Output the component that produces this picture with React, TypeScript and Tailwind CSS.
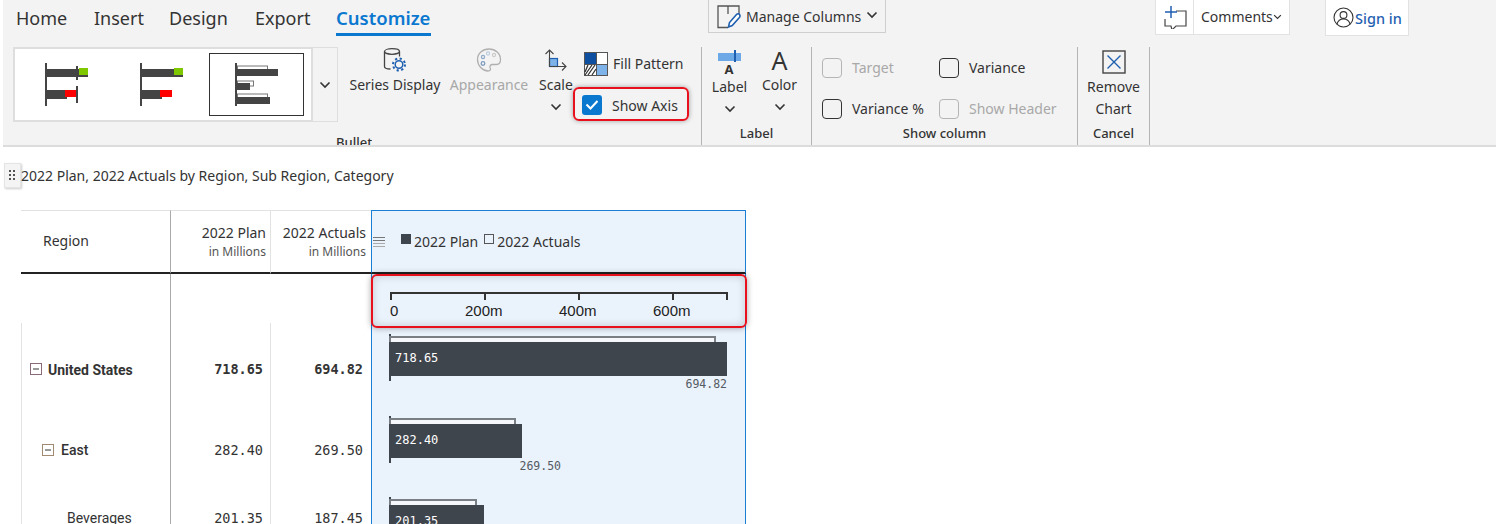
import React from "react";

const ui = "font-['Noto_Sans','Open_Sans',sans-serif]";
const body = "font-['Noto_Sans',Roboto,sans-serif]";
const rowFont = "font-['Roboto','Noto_Sans',sans-serif]";
const mono = "font-['DejaVu_Sans_Mono','Liberation_Mono',monospace]";

function Chevron({ className = "" }: { className?: string }) {
  return (
    <svg width="12" height="8" viewBox="0 0 12 8" className={className} fill="none" stroke="#333" strokeWidth="1.6">
      <path d="M1.5 1.5 6 6l4.5-4.5" />
    </svg>
  );
}

function GalleryOne({ gap }: { gap: boolean }) {
  return (
    <svg width="46" height="46" viewBox="0 0 46 46">
      <rect x="0" y="0" width="2" height="43" fill="#444" />
      <rect x="2" y="6" width="32" height="8" fill="#444" />
      <rect x="34" y="6" width="9" height="8" fill="#444" />
      <rect x="34" y="5" width="9" height="7" fill="#7fc800" />
      <rect x="2" y="27" width="20" height="9" fill="#444" />
      <rect x="20" y="27" width="12" height="7" fill="#ff0000" />
      {gap && <rect x="31" y="3" width="2" height="14" fill="#444" />}
      {gap && <rect x="31" y="23" width="2" height="17" fill="#444" />}
    </svg>
  );
}

function GalleryThree() {
  return (
    <svg width="46" height="46" viewBox="0 0 46 46">
      <rect x="0" y="0" width="2" height="43" fill="#444" />
      <rect x="2.5" y="3" width="30" height="4" fill="#fff" stroke="#777" />
      <rect x="2" y="6" width="41" height="7" fill="#444" />
      <rect x="2.5" y="18" width="16" height="5" fill="#fff" stroke="#777" />
      <rect x="2" y="20" width="13" height="7" fill="#444" />
      <rect x="2.5" y="31" width="30" height="5" fill="#fff" stroke="#777" />
      <rect x="2" y="34" width="33" height="7" fill="#444" />
    </svg>
  );
}

function SeriesIcon() {
  return (
    <svg width="26" height="26" viewBox="0 0 26 26" fill="none">
      <ellipse cx="10" cy="4.500" rx="7.500" ry="2.800" stroke="#444" strokeWidth="1.300" />
      <path d="M2.500 4.500v15c0 1.600 2.500 2.500 6 2.500" stroke="#444" strokeWidth="1.300" />
      <path d="M17.500 4.500v5" stroke="#444" strokeWidth="1.300" />
      <circle cx="17" cy="17.500" r="3.800" stroke="#1f5fb0" strokeWidth="1.500" />
      <circle cx="17" cy="17.500" r="6" stroke="#1f5fb0" strokeWidth="2" strokeDasharray="2.200 2.500" />
    </svg>
  );
}

function PaletteIcon() {
  return (
    <svg width="26" height="26" viewBox="0 0 26 26" fill="none">
      <path d="M13 2C6.500 2 1.500 6.500 1.500 12.500S6.500 24 12 24c2.500 0 3-1.600 2.200-3-.9-1.700.2-3.500 2.300-3.500h4C23 17.500 24.500 15.500 24.500 12.500 24.500 6.500 19.500 2 13 2Z" stroke="#b0b0b0" strokeWidth="1.300" />
      <circle cx="12" cy="6.500" r="1.600" stroke="#b9cbe0" strokeWidth="1.100" />
      <circle cx="18" cy="8" r="1.600" stroke="#c8c8c8" strokeWidth="1.100" />
      <circle cx="7" cy="10" r="1.600" stroke="#8fa9c9" strokeWidth="1.200" />
      <circle cx="7" cy="16.500" r="1.800" stroke="#7f9cc0" strokeWidth="1.300" />
    </svg>
  );
}

function ScaleIcon() {
  return (
    <svg width="24" height="24" viewBox="0 0 24 24" fill="none">
      <rect x="5.500" y="10.500" width="8" height="8" fill="#7db3e8" stroke="#1f5fb0" strokeWidth="1.200" />
      <path d="M5.500 18.500V2M1.500 6 5.500 2 9.500 6M5.500 18.500H22M18 14.500 22 18.500 18 22.500" stroke="#444" strokeWidth="1.100" />
    </svg>
  );
}

function FillIcon() {
  return (
    <svg width="24" height="24" viewBox="0 0 24 24">
      <rect width="24" height="24" fill="#555" />
      <rect x="1" y="1" width="11" height="11" fill="#0f4fa0" />
      <rect x="13" y="1" width="10" height="11" fill="#fff" />
      <rect x="13" y="13" width="10" height="10" fill="#7db3e8" />
      <rect x="1" y="13" width="11" height="10" fill="#fff" />
      <path d="M1 20 4 13M1 23 8 13M4 23 11 13M8 23 12 17" stroke="#333" strokeWidth="1.300" />
    </svg>
  );
}

function LabelIcon() {
  return (
    <svg width="24" height="24" viewBox="0 0 24 24">
      <rect x="0" y="3" width="23" height="8" fill="#6da9e6" />
      <rect x="16" y="0" width="2" height="12" fill="#1f5fb0" />
      <text x="11" y="24" textAnchor="middle" fontSize="13" fontWeight="700" fill="#333" fontFamily="Noto Sans, sans-serif">A</text>
    </svg>
  );
}

function RemoveIcon() {
  return (
    <svg width="24" height="24" viewBox="0 0 24 24" fill="none">
      <rect x="1" y="1" width="22" height="22" stroke="#444" strokeWidth="1.400" />
      <path d="M5.500 5.500l13 13M18.500 5.500l-13 13" stroke="#1f5fb0" strokeWidth="1.400" />
    </svg>
  );
}

function ManageIcon() {
  return (
    <svg width="24" height="24" viewBox="0 0 24 24" fill="none">
      <path d="M11 22.500H1V1h21v9M11 1v8" stroke="#555" strokeWidth="1.300" />
      <path d="M11.500 22l1-4.500 7-8c1-1.100 2.300-1 3 0s.6 2.200-.3 3.200l-7 7.800Z" fill="#fff" stroke="#1f5fb0" strokeWidth="1.600" />
    </svg>
  );
}

function CommentIcon() {
  return (
    <svg width="24" height="24" viewBox="0 0 24 24" fill="none">
      <path d="M13 6h10v15h-10l-4 4-1-4H2v-7" stroke="#444" strokeWidth="1.200" />
      <path d="M8 1v12M2 7h12" stroke="#1f5fb0" strokeWidth="1.500" />
    </svg>
  );
}

function UserIcon() {
  return (
    <svg width="21" height="21" viewBox="0 0 21 21" fill="none" stroke="#333" strokeWidth="1.100">
      <circle cx="10.500" cy="10.500" r="9.500" />
      <circle cx="10.500" cy="8" r="3.400" />
      <path d="M4 17c1-3.500 3.500-5 6.500-5s5.500 1.500 6.500 5" />
    </svg>
  );
}

function Box({ on = "n" }: { on?: "n" | "d" }) {
  return (
    <span
      className={
        on === "d"
          ? "block w-5 h-5 rounded-[4px] border border-[#b5b5b5]"
          : "block w-5 h-5 rounded-[4px] border border-[#333] "
      }
    />
  );
}

function Big({ icon, label, dim, chev, className = "" }: { icon: React.ReactNode; label: React.ReactNode; dim?: boolean; chev?: boolean; className?: string }) {
  return (
    <div className={"flex flex-col items-center " + className}>
      <div className="h-[26px] flex items-center justify-center">{icon}</div>
      <div className={"mt-[2px] text-[14px] leading-[20px] whitespace-nowrap text-center " + (dim ? "text-[#a8a8a8]" : "text-[#333]")}>{label}</div>
      {chev && <Chevron className="mt-[8px]" />}
    </div>
  );
}

const bars = [
  { key: "us", plan: "718.65", actual: "694.82", planW: "w-[338px]", actW: "w-[327px]", labelCl: "w-[338px] justify-end", pad: "pt-[11px]", h: "h-[87px]" },
  { key: "east", plan: "282.40", actual: "269.50", planW: "w-[133px]", actW: "w-[127px]", labelCl: "w-[172px] justify-end", pad: "pt-[6px]", h: "h-[81px]" },
  { key: "bev", plan: "201.35", actual: "187.45", planW: "w-[95px]", actW: "w-[88px]", labelCl: "w-[130px] justify-end", pad: "pt-[6px]", h: "h-[33px]" },
];

function Bar({ b }: { b: (typeof bars)[number] }) {
  return (
    <div className={"pl-[17px] bg-[#eaf2fc] overflow-hidden " + b.pad + " " + b.h}>
      <div className="flex">
        <div className="w-[2px] h-[47px] bg-[#3f454d]" />
        <div className="pt-[2px] -ml-[2px]">
          <div className={"h-[6px] border-2 border-b-0 border-[#7a7f86] bg-[#f5f7fa] " + b.actW} />
          <div className={"h-[34px] bg-[#3f454d] text-white pl-[6px] pb-[2px] flex items-center text-[12px] " + mono + " " + b.planW}>{b.plan}</div>
          <div className={"flex text-[11.5px] leading-[16px] text-[#555b62] " + mono + " " + b.labelCl}>{b.actual}</div>
        </div>
      </div>
    </div>
  );
}

export default function App() {
  return (
    <div className={"w-[1496px] h-[524px] overflow-hidden bg-white relative " + ui}>
      {/* ribbon */}
      <div className="ml-[3px] h-[147px] bg-[#f3f3f3] border-b-2 border-[#dcdcdc]">
        <div className="relative h-[47px] flex items-start pl-[13px] text-[18px] leading-[24px] text-[#333]">
          <div className="pt-[6px] w-[78px]">Home</div>
          <div className="pt-[6px] w-[75px]">Insert</div>
          <div className="pt-[6px] w-[86px]">Design</div>
          <div className="pt-[6px] w-[81px]">Export</div>
          <div className="pt-[6px] w-[95px] flex flex-col font-semibold text-[18.500px] text-[#0b78d0]">
            <span>Customize</span>
            <span className="h-[2.500px] bg-[#0b78d0] mt-[3px]" />
          </div>
          <div className="ml-[277px] h-[33px] w-[178px] border border-[#cfcfcf] border-t-0 flex items-center pl-[8px] gap-[5px] pt-[1px] text-[14px]">
            <ManageIcon />
            <span className="text-[#333]">Manage Columns</span>
            <Chevron className="-mt-[3px]" />
          </div>
          <div className="ml-[269px] h-[35px] w-[135px] bg-white border-b border-r border-l border-[#e2e2e2] flex items-center text-[14px]">
            <div className="w-[38px] h-full border-r border-[#e2e2e2] flex items-center justify-center"><CommentIcon /></div>
            <span className="pl-[7px] text-[#333]">Comments</span>
            <Chevron className="w-[9px]" />
          </div>
          <div className="ml-[35px] h-[36px] w-[84px] bg-white border-b border-r border-l border-[#e2e2e2] flex items-center pl-[7px] gap-[1px] text-[14.500px] font-medium text-[#1f5fb0]">
            <UserIcon />
            <span>Sign in</span>
          </div>
        </div>

        <div className="flex h-[98px]">
          {/* Bullet */}
          <div className="w-[699px] border-r border-[#b5b5b5] relative pl-[10px] flex">
            <div className="h-[75px] w-[300px] bg-white border-2 border-[#dedede] flex items-start">
              <div className="pl-[30px] pt-[14px] w-[96px]"><GalleryOne gap /></div>
              <div className="pl-[29px] pt-[14px] w-[98px]"><GalleryOne gap={false} /></div>
              <div className="mt-[4px] w-[95px] h-[63px] border border-[#333] pl-[25px] pt-[9px]"><GalleryThree /></div>
            </div>
            <div className="h-[75px] w-[25px] border border-l-0 border-[#dedede] flex items-center justify-center"><Chevron /></div>
            <Big className="ml-[10px] w-[94px]" icon={<SeriesIcon />} label="Series Display" />
            <Big className="w-[94px]" icon={<PaletteIcon />} label="Appearance" dim />
            <Big className="w-[44px] -ml-[2px]" icon={<ScaleIcon />} label="Scale" chev />
            <div className="ml-[5px] flex flex-col">
              <div className="flex items-center gap-[5px] h-[34px] pl-[1px] pb-[1px] text-[14px] text-[#333] whitespace-nowrap"><FillIcon /><span>Fill Pattern</span></div>
              <div className="relative -ml-[10px] mt-[6px] w-[116px] h-[34px] rounded-[6px] border-2 border-[#e8101c] shadow-[0_0_5px_rgba(0,0,0,0.35)] flex items-center pl-[7px] pt-[2px] gap-[10px] text-[14px] text-[#333] whitespace-nowrap">
                <span className="w-5 h-5 rounded-[3px] bg-[#0b78d0] flex items-center justify-center">
                  <svg width="14" height="12" viewBox="0 0 14 12" fill="none" stroke="#fff" strokeWidth="2"><path d="M1.500 5.500 5.500 9.500 12.500 2" /></svg>
                </span>
                <span>Show Axis</span>
              </div>
            </div>
            <div className="absolute left-[333px] bottom-0 text-[13px] leading-[18px] font-medium text-[#333] h-[12px] overflow-hidden">Bullet</div>
          </div>
          {/* Label */}
          <div className="w-[110px] border-r border-[#b5b5b5] flex flex-col items-center">
            <div className="h-[77px] flex gap-[26px] -ml-[4px]">
              <Big className="w-[24px] pt-[2px]" icon={<LabelIcon />} label="Label" chev />
              <Big className="w-[24px]" icon={<span className="text-[25px] leading-[26px] text-[#333]">A</span>} label="Color" chev />
            </div>
            <div className="text-[13px] leading-[18px] font-medium text-[#333]">Label</div>
          </div>
          {/* Show column */}
          <div className="w-[266px] border-r border-[#b5b5b5] flex flex-col">
            <div className="h-[77px] grid grid-cols-[117px_1fr] grid-rows-[41px_41px] pl-[10px] text-[14px]">
              <div className="flex items-center gap-[10px] text-[#a8a8a8]"><Box on="d" />Target</div>
              <div className="flex items-center gap-[10px] text-[#333]"><Box />Variance</div>
              <div className="flex items-center gap-[10px] text-[#333]"><Box />Variance %</div>
              <div className="flex items-center gap-[10px] text-[#a8a8a8]"><Box on="d" />Show Header</div>
            </div>
            <div className="text-center text-[13px] leading-[18px] font-medium text-[#333]">Show column</div>
          </div>
          {/* Cancel */}
          <div className="w-[72px] border-r border-[#b5b5b5] flex flex-col items-center">
            <div className="h-[77px] flex flex-col items-center pt-[3px]">
              <RemoveIcon />
              <div className="text-[14px] leading-[22px] text-center text-[#333] mt-[2px]">Remove<br />Chart</div>
            </div>
            <div className="text-[13px] leading-[18px] font-medium text-[#333]">Cancel</div>
          </div>
        </div>
      </div>

      {/* title */}
      <div className={"flex items-center h-[63px] pb-[7px] " + body}>
        <div className="ml-[4px] w-[17px] h-[25px] bg-[#f4f4f4] border border-[#e4e4e4] shadow-[1px_1px_2px_rgba(0,0,0,0.2)] flex items-center justify-center">
          <svg width="7" height="10" viewBox="0 0 7 10" fill="#555">
            <rect x="0" y="0" width="2" height="2" /><rect x="4" y="0" width="2" height="2" />
            <rect x="0" y="4" width="2" height="2" /><rect x="4" y="4" width="2" height="2" />
            <rect x="0" y="8" width="2" height="2" /><rect x="4" y="8" width="2" height="2" />
          </svg>
        </div>
        <span className="text-[14px] text-[#333]">2022 Plan, 2022 Actuals by Region, Sub Region, Category</span>
      </div>

      {/* table */}
      <div className={"ml-[21px] grid grid-cols-[150px_100px_100px_375px] text-[#333] " + body}>
        {/* header */}
        <div className="h-[64px] border-t border-[#e2e2e2] border-b-2 border-b-[#222] border-r border-r-[#aaa] flex items-center pl-[22px] text-[14px] pb-[2px]">Region</div>
        <div className="h-[64px] border-t border-[#e2e2e2] border-b-2 border-b-[#222] border-r border-r-[#e2e2e2] flex flex-col items-end justify-center pr-[4px] pt-[1px] text-[14px] leading-[19px]">
          <span>2022 Plan</span>
          <span className="text-[12px] leading-[19px] text-[#555]">in Millions</span>
        </div>
        <div className="h-[64px] border-t border-[#e2e2e2] border-b-2 border-b-[#222] flex flex-col items-end justify-center pr-[5px] pt-[1px] text-[14px] leading-[19px]">
          <span>2022 Actuals</span>
          <span className="text-[12px] leading-[19px] text-[#555]">in Millions</span>
        </div>
        <div className="h-[64px] border-t border-x border-[#1a7fd4] bg-[#eaf2fc] flex items-center text-[14px] border-b-2 border-b-[#222]">
          <svg width="12" height="12" viewBox="0 0 12 12" className="ml-[1px]" fill="none" strokeWidth="1">
            <path d="M0 1.500h12M0 4.500h12" stroke="#777" /><path d="M0 7.500h12M0 10.500h12" stroke="#aaa" />
          </svg>
          <span className="ml-[16px] w-[10px] h-[10px] bg-[#3f454d] -mt-[5px]" />
          <span className="ml-[3px]">2022 Plan</span>
          <span className="ml-[6px] w-[10px] h-[10px] border border-[#555] -mt-[5px]" />
          <span className="ml-[3px]">2022 Actuals</span>
        </div>

        {/* axis row */}
        <div className="h-[49px] border-r border-[#aaa]" />
        <div className="h-[49px]" />
        <div className="h-[49px]" />
        <div className="h-[49px] border-x border-[#1a7fd4] bg-[#eaf2fc] pl-[18px] pt-[18px]">
          <div className="relative w-[338px] h-[10px] border-t-2 border-[#333]">
            {["left-0", "left-[94px]", "left-[188px]", "left-[282px]", "left-[336px]"].map((l) => (
              <span key={l} className={"absolute top-0 w-[1.500px] h-[6px] bg-[#333] " + l} />
            ))}
          </div>
          <div className="relative font-['Liberation_Sans',sans-serif] text-[15px] leading-[18px] text-[#222]">
            <span className="absolute left-0 top-0">0</span>
            <span className="absolute left-[75px] top-0">200m</span>
            <span className="absolute left-[169px] top-0">400m</span>
            <span className="absolute left-[263px] top-0">600m</span>
          </div>
        </div>

        {/* US */}
        <div className={"h-[87px] border-l border-[#e2e2e2] border-r border-r-[#aaa] pl-[8px] pt-[38px] flex items-start font-bold text-[14px] leading-[18px] " + rowFont}>
          <svg width="12" height="12" viewBox="0 0 12 12" className="mt-[2px] mr-[6px]" fill="none"><rect x=".5" y=".5" width="11" height="11" stroke="#8a6a7a" /><path d="M3 6h6" stroke="#333" /></svg>
          United States
        </div>
        <div className={"h-[87px] border-r border-[#e2e2e2] pt-[37px] pr-[7px] text-right font-bold text-[13.500px] leading-[18px] " + mono}>718.65</div>
        <div className={"h-[87px] pt-[37px] pr-[8px] text-right font-bold text-[13.500px] leading-[18px] " + mono}>694.82</div>
        <div className="border-x border-[#1a7fd4]"><Bar b={bars[0]} /></div>

        {/* East */}
        <div className={"h-[81px] border-l border-[#e2e2e2] border-r border-r-[#aaa] pl-[20px] pt-[31px] flex items-start font-medium text-[14px] leading-[18px] " + rowFont}>
          <svg width="12" height="12" viewBox="0 0 12 12" className="mt-[3px] mr-[7px]" fill="none"><rect x=".5" y=".5" width="11" height="11" stroke="#a08a70" /><path d="M3 6h6" stroke="#333" /></svg>
          East
        </div>
        <div className={"h-[81px] border-r border-[#e2e2e2] pt-[31px] pr-[7px] text-right text-[13.500px] leading-[18px] " + mono}>282.40</div>
        <div className={"h-[81px] pt-[31px] pr-[8px] text-right text-[13.500px] leading-[18px] " + mono}>269.50</div>
        <div className="border-x border-[#1a7fd4]"><Bar b={bars[1]} /></div>

        {/* Beverages */}
        <div className={"h-[33px] border-l border-[#e2e2e2] border-r border-r-[#aaa] pl-[45px] pt-[18px] text-[14px] leading-[18px] " + rowFont}>Beverages</div>
        <div className={"h-[33px] border-r border-[#e2e2e2] pt-[18px] pr-[7px] text-right text-[13.500px] leading-[18px] " + mono}>201.35</div>
        <div className={"h-[33px] pt-[18px] pr-[8px] text-right text-[13.500px] leading-[18px] " + mono}>187.45</div>
        <div className="border-x border-[#1a7fd4]"><Bar b={bars[2]} /></div>
      </div>

      {/* highlight over the axis */}
      <div className="absolute left-[371px] top-[274px] w-[376px] h-[54px] rounded-[6px] border-2 border-[#e8101c] shadow-[0_0_6px_rgba(0,0,0,0.35),inset_0_0_8px_rgba(0,0,0,0.18)]" />
    </div>
  );
}
